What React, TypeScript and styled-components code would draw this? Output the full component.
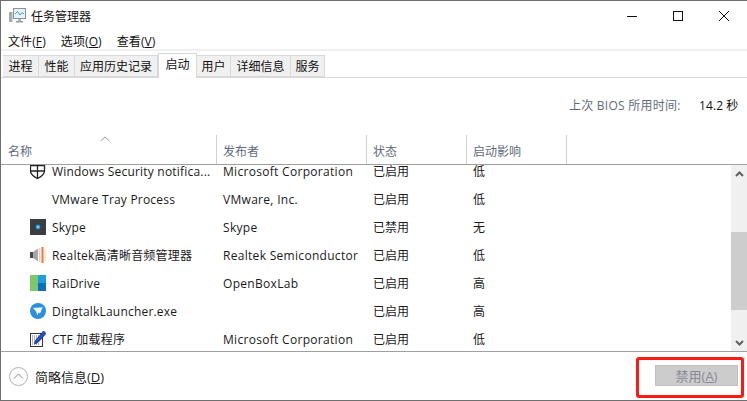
import React from "react";
import styled, { createGlobalStyle } from "styled-components";

const Global = createGlobalStyle`
  html, body { margin: 0; padding: 0; background: #fff; }
  #root { width: 747px; height: 401px; }
`;

const FONT = `"Open Sans", "Noto Sans CJK SC", sans-serif`;

const Win = styled.div`
  width: 747px; height: 401px; box-sizing: border-box; overflow: hidden;
  display: flex; flex-direction: column; background: #fff;
  border-top: 1px solid #6f6f6f; border-left: 1px solid #6f6f6f; border-bottom: 1px solid #6f6f6f;
  font-family: ${FONT}; font-size: 12px; color: #1a1a1a;
`;
const TitleBar = styled.div`
  height: 30px; display: flex; align-items: center; padding-left: 8px; flex: none;
`;
const TitleText = styled.span`font-size: 12px; flex: 1; color: #111; margin-left: 5px;`;
const WinBtn = styled.div`
  width: 46px; height: 30px; display: flex; align-items: center; justify-content: center; flex: none;
`;
const MenuBar = styled.div`
  height: 18px; box-sizing: border-box; padding: 1px 0 0 7px;
  display: flex; align-items: center; gap: 15px; flex: none; color: #111;
`;
const MenuItem = styled.span`letter-spacing: .1px;`;
const Band = styled.div`height: 2px; background: #f0f0f0; flex: none;`;
const TabBar = styled.div`
  height: 26px; flex: none; display: flex; align-items: flex-end; padding-left: 2px;
  border-bottom: 1px solid #d9d9d9;
`;
const Tab = styled.div<{ $active?: boolean; $w: number }>`
  width: ${p => p.$w}px; box-sizing: border-box; text-align: center; flex: none;
  height: ${p => (p.$active ? 25 : 22)}px;
  line-height: ${p => (p.$active ? 22 : 21)}px;
  margin-bottom: ${p => (p.$active ? -1 : 0)}px;
  background: ${p => (p.$active ? "#fff" : "#f0f0f0")};
  border: 1px solid #d9d9d9;
  border-bottom: ${p => (p.$active ? "none" : "1px solid #d9d9d9")};
  border-left: ${p => (p.$active ? "1px solid #d9d9d9" : "none")};
  color: #111;
`;
const InfoRow = styled.div`
  height: 57px; flex: none; display: flex; justify-content: flex-end; align-items: center;
  padding-bottom: 3px; box-sizing: border-box;
`;
const InfoLabel = styled.span`color: #5f6b7c; width: 130px; letter-spacing: .25px;`;
const InfoValue = styled.span`color: #111; width: 48px; white-space: nowrap; letter-spacing: .1px;`;
const Header = styled.div`
  height: 29px; flex: none; display: grid; grid-template-columns: 216px 150px 100px 100px;
  border-bottom: 1px solid #a0a0a0;
  position: relative;
`;
const HeadCell = styled.div`
  border-right: 1px solid #d0d0d0; padding: 9px 0 0 7px; color: #5f6b7c; line-height: 16px;
  &:not(:first-of-type) { padding-left: 6px; }
`;
const SortArrow = styled.svg`position: absolute; left: 99px; top: 1px;`;
const Body = styled.div`
  flex: 1; min-height: 0; display: flex; overflow: hidden;
`;
const List = styled.div`flex: 1; overflow: hidden;`;
const Rows = styled.div`margin-top: -8px;`;
const Row = styled.div`
  height: 28px; display: grid; grid-template-columns: 215px 150px 100px 100px; align-items: center; white-space: nowrap; color: #1a1a1a;
`;
const NameCell = styled.div`display: flex; align-items: center; padding-left: 29px; gap: 6px; letter-spacing: .2px;`;
const IconSlot = styled.div`width: 16px; height: 16px; flex: none; display: flex;`;
const Cell = styled.div<{ $wide?: boolean }>`
  padding-left: 7px; letter-spacing: ${p => (p.$wide ? ".3px" : "0")};
`;
const ScrollBar = styled.div`
  width: 16px; background: #f0f0f0; flex: none; display: flex; flex-direction: column;
`;
const ScrollBtn = styled.div`height: 17px; display: flex; align-items: center; justify-content: center; flex: none;`;
const Track = styled.div`flex: 1; padding-top: 50px; padding-bottom: 24px; display: flex;`;
const Thumb = styled.div`flex: 1; background: #cdcdcd;`;
const Footer = styled.div`
  height: 49px; flex: none; border-top: 1px solid #a0a0a0; display: flex; align-items: center;
  justify-content: space-between; box-sizing: border-box; padding: 0 3px 0 8px;
`;
const Toggle = styled.div`display: flex; align-items: center; gap: 7px; color: #1a1a1a; font-size: 13px;`;
const Key = styled.span`text-decoration: underline;`;
const Highlight = styled.div`
  width: 108px; height: 41px; box-sizing: border-box; border: 3px solid #fb1a14; border-radius: 3px;
  display: flex; align-items: center; justify-content: flex-end; padding: 0 3px 4px 0; margin-top: 3px;
`;
const DisabledButton = styled.div`
  width: 83px; height: 21px; box-sizing: border-box; background: #cccccc; border: 1px solid #bfbfbf;
  color: #8a8a96; font-size: 13px; display: flex; align-items: center; justify-content: center;
`;

const rows = [
  { name: "Windows Security notifica...", pub: "Microsoft Corporation", st: "已启用", imp: "低", icon: "shield" },
  { name: "VMware Tray Process", pub: "VMware, Inc.", st: "已启用", imp: "低", icon: "" },
  { name: "Skype", pub: "Skype", st: "已禁用", imp: "无", icon: "skype" },
  { name: "Realtek高清晰音频管理器", pub: "Realtek Semiconductor", st: "已启用", imp: "低", icon: "audio" },
  { name: "RaiDrive", pub: "OpenBoxLab", st: "已启用", imp: "高", icon: "rai" },
  { name: "DingtalkLauncher.exe", pub: "", st: "已启用", imp: "高", icon: "ding" },
  { name: "CTF 加载程序", pub: "Microsoft Corporation", st: "已启用", imp: "低", icon: "ctf" },
];

const RowIcon = ({ kind }: { kind: string }) => {
  switch (kind) {
    case "shield":
      return (
        <svg width="16" height="16" viewBox="0 0 16 16">
          <path d="M0.5 2.5 L14.5 2.5 L14.5 8 C14.5 11.5 10.5 14 7.5 15.5 C4.5 14 0.5 11.5 0.5 8 Z" fill="none" stroke="#222" strokeWidth="1.3" />
          <path d="M7.5 2.5 V15 M0.5 8 H14.5" stroke="#222" strokeWidth="1.3" />
        </svg>
      );
    case "skype":
      return (
        <svg width="16" height="16" viewBox="0 0 16 16">
          <rect width="16" height="16" fill="#3a3d42" />
          <circle cx="8" cy="8" r="2.4" fill="#1d9be0" />
          <circle cx="8" cy="8" r="0.9" fill="#bfe6fb" />
        </svg>
      );
    case "audio":
      return (
        <svg width="16" height="16" viewBox="0 0 16 16">
          <rect x="0" y="5" width="3" height="6" fill="#4a4a4a" />
          <path d="M3 5 L8 1.5 V14.5 L3 11 Z" fill="#a6a6a6" />
          <rect x="9" y="1" width="1.5" height="14" fill="#d4d4d4" />
          <rect x="11.5" y="0" width="2" height="16" fill="#f07a2c" />
          <rect x="14.5" y="2" width="1" height="12" fill="#f6d9c4" />
        </svg>
      );
    case "rai":
      return (
        <svg width="16" height="16" viewBox="0 0 16 16">
          <rect x="0" y="0" width="8" height="16" fill="#7dc86c" />
          <rect x="8" y="0" width="8" height="8" fill="#1fa0dc" />
          <rect x="8" y="8" width="8" height="8" fill="#0d6fc0" />
        </svg>
      );
    case "ding":
      return (
        <svg width="16" height="16" viewBox="0 0 16 16">
          <circle cx="8" cy="8" r="8" fill="#2b8fdc" />
          <path d="M3 5 L12.8 4.2 L10 10.5 L8.3 9.8 L7.4 12.6 L6.2 8.8 Z" fill="#eef7fe" />
        </svg>
      );
    case "ctf":
      return (
        <svg width="16" height="16" viewBox="0 0 16 16">
          <rect x="0.5" y="2.5" width="12" height="13" fill="#fff" stroke="#333" />
          <path d="M2 5 H11 M2 7 H9 M2 9 H7 M2 11 H5 M2 13 H9" stroke="#666" strokeDasharray="1 1" />
          <path d="M13.5 0 L16 2.5 L8 11.5 L4.5 13 L5.5 9.5 Z" fill="#1f4fd0" stroke="#10245e" strokeWidth=".7" />
        </svg>
      );
    default:
      return null;
  }
};

const tabs: [string, number, boolean?][] = [
  ["进程", 36], ["性能", 36], ["应用历史记录", 83], ["启动", 39, true], ["用户", 34], ["详细信息", 60], ["服务", 34],
];

export default function App() {
  return (
    <Win>
      <Global />
      <TitleBar>
        <svg width="17" height="16" viewBox="0 0 17 16">
          <rect x="0" y="4" width="3.5" height="10" fill="#a9adb2" />
          <rect x="0.8" y="5" width="2" height="1.5" fill="#6fbf6a" />
          <rect x="4.5" y="0.5" width="12" height="10" fill="#e6f2fb" stroke="#8b9299" />
          <path d="M6 6 L8.5 3.5 L11 7 L13 4.5 L15 6" fill="none" stroke="#4b9ad6" />
          <rect x="9" y="11" width="3" height="2" fill="#b5b8bc" />
          <rect x="7" y="13" width="7" height="1.5" fill="#94989c" />
        </svg>
        <TitleText>任务管理器</TitleText>
        <WinBtn>
          <svg width="10" height="10" viewBox="0 0 10 10"><path d="M0 5.5 H10" stroke="#111" /></svg>
        </WinBtn>
        <WinBtn>
          <svg width="10" height="10" viewBox="0 0 10 10"><rect x=".5" y=".5" width="9" height="9" fill="none" stroke="#111" /></svg>
        </WinBtn>
        <WinBtn>
          <svg width="10" height="10" viewBox="0 0 10 10"><path d="M0 0 L10 10 M10 0 L0 10" stroke="#111" /></svg>
        </WinBtn>
      </TitleBar>
      <MenuBar>
        <MenuItem>文件(<Key>F</Key>)</MenuItem>
        <MenuItem>选项(<Key>O</Key>)</MenuItem>
        <MenuItem>查看(<Key>V</Key>)</MenuItem>
      </MenuBar>
      <Band />
      <TabBar>
        {tabs.map(([t, w, a]) => (
          <Tab key={t} $w={w} $active={a}>{t}</Tab>
        ))}
      </TabBar>
      <InfoRow>
        <InfoLabel>上次 BIOS 所用时间:</InfoLabel>
        <InfoValue>14.2 秒</InfoValue>
      </InfoRow>
      <Header>
        <SortArrow width="10" height="6" viewBox="0 0 10 6">
          <path d="M0.5 5 L5 1 L9.5 5" fill="none" stroke="#9a9a9a" />
        </SortArrow>
        <HeadCell>名称</HeadCell>
        <HeadCell>发布者</HeadCell>
        <HeadCell>状态</HeadCell>
        <HeadCell>启动影响</HeadCell>
      </Header>
      <Body>
        <List>
          <Rows>
            {rows.map(r => (
              <Row key={r.name}>
                <NameCell>
                  <IconSlot><RowIcon kind={r.icon} /></IconSlot>
                  <span>{r.name}</span>
                </NameCell>
                <Cell $wide>{r.pub}</Cell>
                <Cell>{r.st}</Cell>
                <Cell>{r.imp}</Cell>
              </Row>
            ))}
          </Rows>
        </List>
        <ScrollBar>
          <ScrollBtn>
            <svg width="9" height="6" viewBox="0 0 9 6"><path d="M1 5 L4.5 1.5 L8 5" fill="none" stroke="#606060" strokeWidth="2" /></svg>
          </ScrollBtn>
          <Track><Thumb /></Track>
          <ScrollBtn>
            <svg width="9" height="6" viewBox="0 0 9 6"><path d="M1 1 L4.5 4.5 L8 1" fill="none" stroke="#606060" strokeWidth="2" /></svg>
          </ScrollBtn>
        </ScrollBar>
      </Body>
      <Footer>
        <Toggle>
          <svg width="19" height="19" viewBox="0 0 19 19">
            <circle cx="9.5" cy="9.5" r="9" fill="none" stroke="#b0b0b0" />
            <path d="M5 11.5 L9.5 7 L14 11.5" fill="none" stroke="#8a8a8a" />
          </svg>
          <span>简略信息(<Key>D</Key>)</span>
        </Toggle>
        <Highlight>
          <DisabledButton><span>禁用(<Key>A</Key>)</span></DisabledButton>
        </Highlight>
      </Footer>
    </Win>
  );
}
